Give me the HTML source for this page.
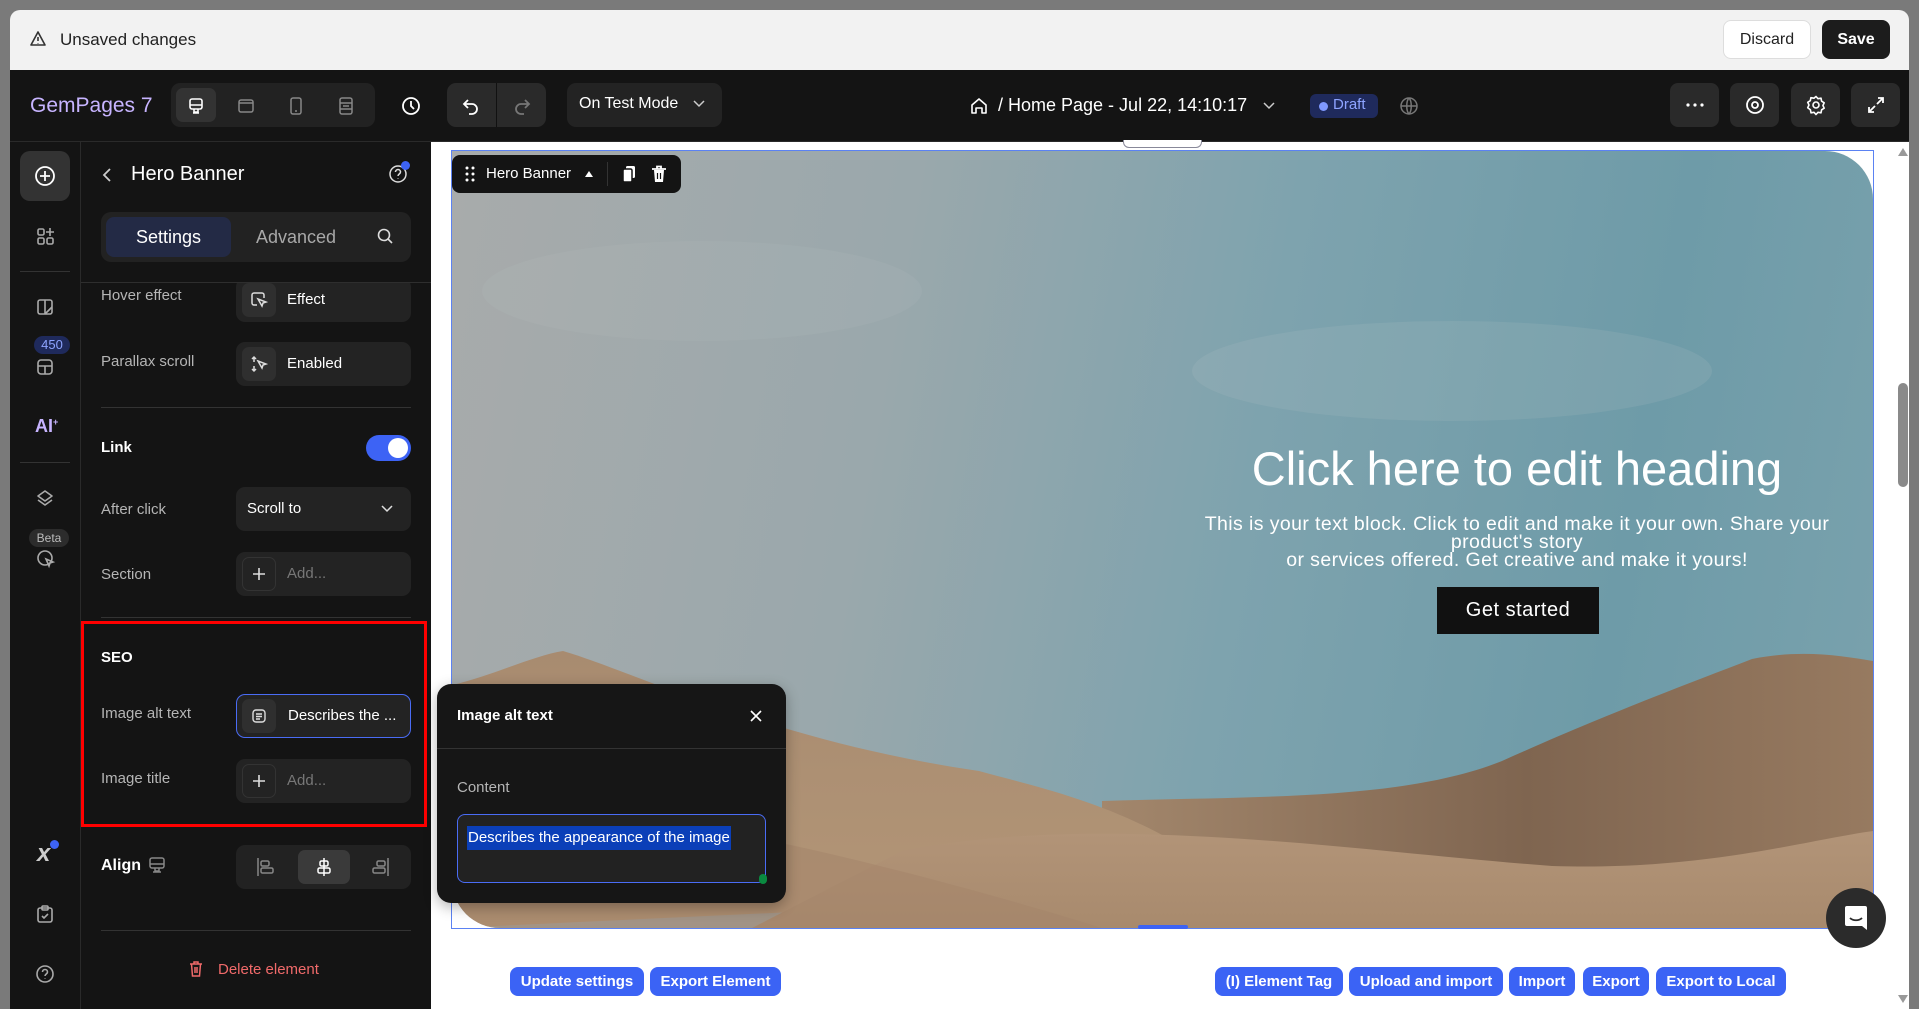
<!DOCTYPE html>
<html><head><meta charset="utf-8">
<style>
*{box-sizing:border-box;margin:0;padding:0}
body{width:1919px;height:1009px;overflow:hidden;background:#7a7a7a;font-family:"Liberation Sans",sans-serif;position:relative}
.a{position:absolute}
.t{color:#fff;white-space:nowrap}
.lbl{color:#b5b5b5;font-size:15px;white-space:nowrap}
.ctl{position:absolute;left:236px;width:175px;height:44px;background:#232323;border-radius:9px}
.ctl .ic{position:absolute;left:6px;top:5px;width:34px;height:34px;background:#2f2f2f;border-radius:7px;display:flex;align-items:center;justify-content:center}
.ctl .tx{position:absolute;left:51px;top:13px;font-size:15px;color:#fff;white-space:nowrap}
.ctl .ph{color:#777}
.tb{position:absolute;top:83px;width:49px;height:44px;background:#2a2a2a;border-radius:8px;display:flex;align-items:center;justify-content:center}
.bb{position:absolute;top:967px;height:29px;background:#3b63f5;border-radius:8px;color:#fff;font-size:15px;font-weight:bold;display:flex;align-items:center;justify-content:center;white-space:nowrap}
svg{display:block}
</style></head><body>
<!-- top bar -->
<div class="a" style="left:10px;top:10px;width:1899px;height:60px;background:#f2f2f2;border-radius:10px 10px 0 0"></div>
<svg class="a" style="left:29px;top:30px" width="18" height="18" viewBox="0 0 18 18" fill="none" stroke="#333" stroke-width="1.6"><path d="M9 2L16 15H2Z" stroke-linejoin="round"/><path d="M9 7v4M9 13v.5"/></svg>
<div class="a" style="left:60px;top:30px;font-size:17px;color:#222">Unsaved changes</div>
<div class="a" style="left:1723px;top:20px;width:88px;height:39px;background:#fff;border:1px solid #ddd;border-radius:8px;font-size:16px;color:#222;display:flex;align-items:center;justify-content:center">Discard</div>
<div class="a" style="left:1822px;top:20px;width:68px;height:39px;background:#1c1c1c;border-radius:8px;font-size:16px;font-weight:bold;color:#fff;display:flex;align-items:center;justify-content:center">Save</div>

<!-- toolbar -->
<div class="a" style="left:10px;top:70px;width:1899px;height:72px;background:#141414;border-bottom:1px solid #2a2a2a"></div>
<div class="a" style="left:30px;top:94px;font-size:21px;color:#c7b4ff">GemPages 7</div>
<div class="a" style="left:171px;top:83px;width:204px;height:44px;background:#222;border-radius:9px"></div>
<div class="a" style="left:176px;top:88px;width:40px;height:34px;background:#333;border-radius:7px"></div>
<svg class="a" style="left:186px;top:96px" width="20" height="20" viewBox="0 0 20 20" fill="none" stroke="#fff" stroke-width="1.6"><rect x="4" y="3" width="12" height="10" rx="2"/><path d="M4 9h12M8 13v3h4v-3M7 17h6"/></svg>
<svg class="a" style="left:237px;top:97px" width="18" height="18" viewBox="0 0 18 18" fill="none" stroke="#888" stroke-width="1.5"><rect x="2" y="3" width="14" height="12" rx="2"/><path d="M2 6h14"/></svg>
<svg class="a" style="left:287px;top:96px" width="18" height="20" viewBox="0 0 18 20" fill="none" stroke="#888" stroke-width="1.5"><rect x="4" y="2" width="10" height="16" rx="2"/><path d="M8 15h2"/></svg>
<svg class="a" style="left:337px;top:96px" width="18" height="20" viewBox="0 0 18 20" fill="none" stroke="#888" stroke-width="1.5"><rect x="3" y="2" width="12" height="16" rx="2"/><path d="M3 7h12M3 13h12M6 10h6"/></svg>
<svg class="a" style="left:400px;top:95px" width="22" height="22" viewBox="0 0 22 22" fill="none" stroke="#fff" stroke-width="1.8"><circle cx="11" cy="11" r="8"/><path d="M11 6v5l3 3"/></svg>
<div class="a" style="left:447px;top:83px;width:99px;height:44px;background:#2a2a2a;border-radius:9px"></div>
<div class="a" style="left:496px;top:83px;width:1px;height:44px;background:#111"></div>
<svg class="a" style="left:460px;top:95px" width="22" height="22" viewBox="0 0 22 22" fill="none" stroke="#fff" stroke-width="1.8"><path d="M8 5L4 9l4 4"/><path d="M4 9h8a5 5 0 010 10H9"/></svg>
<svg class="a" style="left:511px;top:95px" width="22" height="22" viewBox="0 0 22 22" fill="none" stroke="#777" stroke-width="1.8"><path d="M14 5l4 4-4 4"/><path d="M18 9h-8a5 5 0 000 10h3"/></svg>
<div class="a" style="left:567px;top:83px;width:155px;height:44px;background:#232323;border-radius:9px"></div>
<div class="a t" style="left:579px;top:95px;font-size:16px">On Test Mode</div>
<svg class="a" style="left:692px;top:98px" width="14" height="12" viewBox="0 0 14 12" fill="none" stroke="#ccc" stroke-width="1.5"><path d="M2 3l5 5 5-5"/></svg>
<svg class="a" style="left:969px;top:96px" width="20" height="20" viewBox="0 0 20 20" fill="none" stroke="#fff" stroke-width="1.6"><path d="M3 9l7-6 7 6v8h-4v-5H7v5H3z" stroke-linejoin="round"/></svg>
<div class="a t" style="left:998px;top:95px;font-size:18px">/ Home Page - Jul 22, 14:10:17</div>
<svg class="a" style="left:1262px;top:100px" width="14" height="12" viewBox="0 0 14 12" fill="none" stroke="#ccc" stroke-width="1.5"><path d="M2 3l5 5 5-5"/></svg>
<div class="a" style="left:1310px;top:94px;width:68px;height:24px;background:#1f2a5c;border-radius:6px"></div>
<div class="a" style="left:1319px;top:102px;width:9px;height:9px;border-radius:50%;background:#7f98ff"></div>
<div class="a" style="left:1333px;top:96px;font-size:15px;color:#8ea4ff">Draft</div>
<svg class="a" style="left:1399px;top:96px" width="20" height="20" viewBox="0 0 20 20" fill="none" stroke="#777" stroke-width="1.5"><circle cx="10" cy="10" r="8"/><path d="M2 10h16M10 2c3 3 3 13 0 16M10 2c-3 3-3 13 0 16"/></svg>
<div class="tb" style="left:1670px"><svg width="20" height="6"><circle cx="3" cy="3" r="1.6" fill="#fff"/><circle cx="10" cy="3" r="1.6" fill="#fff"/><circle cx="17" cy="3" r="1.6" fill="#fff"/></svg></div>
<div class="tb" style="left:1730px"><svg width="22" height="22" viewBox="0 0 22 22" fill="none" stroke="#fff" stroke-width="1.8"><circle cx="11" cy="11" r="8"/><circle cx="11" cy="11" r="3"/></svg></div>
<div class="tb" style="left:1791px"><svg width="22" height="22" viewBox="0 0 22 22" fill="none" stroke="#fff" stroke-width="1.6"><circle cx="11" cy="11" r="3"/><path d="M11 2.5l2 2.2 3-.5.6 3 2.6 1.6-1.3 2.7 1.3 2.7-2.6 1.6-.6 3-3-.5-2 2.2-2-2.2-3 .5-.6-3L2.7 13.7 4 11 2.7 8.3l2.6-1.6.6-3 3 .5z" stroke-linejoin="round"/></svg></div>
<div class="tb" style="left:1851px"><svg width="20" height="20" viewBox="0 0 20 20" fill="none" stroke="#fff" stroke-width="1.8"><path d="M12 3h5v5M17 3l-6 6M8 17H3v-5M3 17l6-6"/></svg></div>

<!-- left rail -->
<div class="a" style="left:10px;top:142px;width:71px;height:867px;background:#141414;border-right:1px solid #2a2a2a"></div>
<div class="a" style="left:20px;top:151px;width:50px;height:50px;background:#333;border-radius:10px"></div>
<svg class="a" style="left:33px;top:164px" width="24" height="24" viewBox="0 0 24 24" fill="none" stroke="#fff" stroke-width="1.8"><circle cx="12" cy="12" r="9"/><path d="M12 7v10M7 12h10"/></svg>
<svg class="a" style="left:36px;top:226px" width="20" height="20" viewBox="0 0 20 20" fill="none" stroke="#aaa" stroke-width="1.6"><rect x="2" y="3" width="6" height="6" rx="1.5"/><rect x="2" y="12" width="6" height="6" rx="1.5"/><rect x="11" y="12" width="6" height="6" rx="1.5"/><path d="M14 2v8M10 6h8"/></svg>
<div class="a" style="left:20px;top:271px;width:50px;height:1px;background:#333"></div>
<svg class="a" style="left:35px;top:297px" width="20" height="20" viewBox="0 0 20 20" fill="none" stroke="#aaa" stroke-width="1.6"><rect x="3" y="3" width="14" height="14" rx="2"/><path d="M10 3v14M10 17l7-7"/></svg>
<div class="a" style="left:34px;top:336px;width:36px;height:18px;background:#1f2a5c;border-radius:9px;color:#8ea4ff;font-size:13px;text-align:center;line-height:18px">450</div>
<svg class="a" style="left:35px;top:357px" width="20" height="20" viewBox="0 0 20 20" fill="none" stroke="#aaa" stroke-width="1.6"><rect x="3" y="3" width="14" height="14" rx="3"/><path d="M3 9h14M10 9v8"/></svg>
<div class="a" style="left:35px;top:416px;font-size:18px;font-weight:bold;color:#c7b4ff">AI<sup style="font-size:9px">+</sup></div>
<div class="a" style="left:20px;top:462px;width:50px;height:1px;background:#333"></div>
<svg class="a" style="left:35px;top:488px" width="20" height="20" viewBox="0 0 20 20" fill="none" stroke="#aaa" stroke-width="1.6"><path d="M10 3l7 5-7 5-7-5z M3 12l7 5 7-5" stroke-linejoin="round"/></svg>
<div class="a" style="left:29px;top:529px;width:40px;height:18px;background:#2c2c2c;border-radius:9px;color:#bbb;font-size:12px;text-align:center;line-height:18px">Beta</div>
<svg class="a" style="left:36px;top:549px" width="20" height="20" viewBox="0 0 20 20" fill="none" stroke="#aaa" stroke-width="1.6"><circle cx="9" cy="9" r="7"/><path d="M10 10l7 3-3 1-1 3z"/></svg>
<div class="a" style="left:37px;top:840px;font-size:24px;font-weight:bold;color:#ccc;font-style:italic">x</div>
<div class="a" style="left:50px;top:840px;width:9px;height:9px;border-radius:50%;background:#3d63f5"></div>
<svg class="a" style="left:35px;top:904px" width="20" height="20" viewBox="0 0 20 20" fill="none" stroke="#aaa" stroke-width="1.6"><rect x="3" y="4" width="14" height="14" rx="2"/><rect x="7" y="2" width="6" height="4" rx="1"/><path d="M7 12l2 2 4-4"/></svg>
<svg class="a" style="left:35px;top:964px" width="20" height="20" viewBox="0 0 20 20" fill="none" stroke="#aaa" stroke-width="1.6"><circle cx="10" cy="10" r="8"/><path d="M7.5 8a2.5 2.5 0 115 0c0 2-2.5 2-2.5 4M10 14.5v.5"/></svg>

<!-- panel -->
<div class="a" style="left:81px;top:142px;width:350px;height:867px;background:#141414"></div>
<svg class="a" style="left:100px;top:166px" width="14" height="18" viewBox="0 0 14 18" fill="none" stroke="#ccc" stroke-width="1.8"><path d="M10 3L4 9l6 6"/></svg>
<div class="a t" style="left:131px;top:163px;font-size:20px">Hero Banner</div>
<svg class="a" style="left:388px;top:164px" width="20" height="20" viewBox="0 0 20 20" fill="none" stroke="#ddd" stroke-width="1.5"><circle cx="10" cy="10" r="8"/><path d="M7.5 8a2.5 2.5 0 115 0c0 2-2.5 2-2.5 4M10 14.5v.5"/></svg>
<div class="a" style="left:401px;top:161px;width:9px;height:9px;border-radius:50%;background:#3d63f5"></div>
<div class="a" style="left:101px;top:212px;width:310px;height:50px;background:#222;border-radius:10px"></div>
<div class="a" style="left:106px;top:217px;width:125px;height:40px;background:#232a45;border-radius:8px;color:#fff;font-size:18px;text-align:center;line-height:40px">Settings</div>
<div class="a" style="left:256px;top:227px;font-size:18px;color:#a8a8a8">Advanced</div>
<svg class="a" style="left:376px;top:227px" width="18" height="18" viewBox="0 0 18 18" fill="none" stroke="#ddd" stroke-width="1.6"><circle cx="8" cy="8" r="5.5"/><path d="M12 12l4 4"/></svg>
<div class="a" style="left:81px;top:282px;width:350px;height:1px;background:#2e2e2e"></div>

<div style="position:absolute;left:0;top:283px;width:431px;height:726px;overflow:hidden">
 <div class="a lbl" style="left:101px;top:4px">Hover effect</div>
 <div class="ctl" style="top:-5px"><div class="ic"><svg width="18" height="18" viewBox="0 0 18 18" fill="none" stroke="#ddd" stroke-width="1.5"><path d="M14 7V4a2 2 0 00-2-2H4a2 2 0 00-2 2v8a2 2 0 002 2h3"/><path d="M8 8l8 3-3 1-1 3z"/></svg></div><div class="tx">Effect</div></div>
</div>
<div class="a lbl" style="left:101px;top:353px">Parallax scroll</div>
<div class="ctl" style="top:342px"><div class="ic"><svg width="18" height="18" viewBox="0 0 18 18" fill="none" stroke="#ddd" stroke-width="1.5"><path d="M4 2v5M2 4l2-2 2 2M4 16v-5M2 14l2 2 2-2M8 6l8 3-3 1-1 3z"/></svg></div><div class="tx">Enabled</div></div>
<div class="a" style="left:101px;top:407px;width:310px;height:1px;background:#333"></div>
<div class="a t" style="left:101px;top:439px;font-size:15px;font-weight:bold">Link</div>
<div class="a" style="left:366px;top:435px;width:45px;height:26px;background:#3d63f5;border-radius:13px"></div>
<div class="a" style="left:388px;top:438px;width:20px;height:20px;background:#fff;border-radius:50%"></div>
<div class="a lbl" style="left:101px;top:501px">After click</div>
<div class="ctl" style="top:487px"><div class="tx" style="left:11px">Scroll to</div><svg class="a" style="left:144px;top:16px" width="14" height="12" viewBox="0 0 14 12" fill="none" stroke="#ddd" stroke-width="1.5"><path d="M2 3l5 5 5-5"/></svg></div>
<div class="a lbl" style="left:101px;top:566px">Section</div>
<div class="ctl" style="top:552px"><div class="ic" style="background:none;border:1px solid #333"><svg width="14" height="14" fill="none" stroke="#ddd" stroke-width="1.6"><path d="M7 1v12M1 7h12"/></svg></div><div class="tx ph">Add...</div></div>
<div class="a" style="left:101px;top:617px;width:310px;height:1px;background:#333"></div>
<div class="a" style="left:81px;top:621px;width:346px;height:206px;border:3px solid #f00"></div>
<div class="a t" style="left:101px;top:649px;font-size:15px;font-weight:bold">SEO</div>
<div class="a lbl" style="left:101px;top:705px">Image alt text</div>
<div class="ctl" style="top:694px;border:1px solid #4a6cf5"><div class="ic" style="left:5px;top:4px"><svg width="16" height="16" viewBox="0 0 16 16" fill="none" stroke="#ddd" stroke-width="1.4"><rect x="2" y="2" width="12" height="12" rx="3"/><path d="M5 6h6M5 8.5h6M5 11h4"/></svg></div><div class="tx" style="top:12px">Describes the ...</div></div>
<div class="a lbl" style="left:101px;top:770px">Image title</div>
<div class="ctl" style="top:759px"><div class="ic" style="background:none;border:1px solid #333"><svg width="14" height="14" fill="none" stroke="#ddd" stroke-width="1.6"><path d="M7 1v12M1 7h12"/></svg></div><div class="tx ph">Add...</div></div>
<div class="a t" style="left:101px;top:857px;font-size:16px;font-weight:bold">Align</div>
<svg class="a" style="left:148px;top:856px" width="18" height="18" viewBox="0 0 18 18" fill="none" stroke="#888" stroke-width="1.5"><rect x="2" y="2" width="14" height="10" rx="2"/><path d="M2 8h14M7 12v3h4v-3M5 16h8"/></svg>
<div class="a" style="left:236px;top:845px;width:175px;height:44px;background:#222;border-radius:9px"></div>
<div class="a" style="left:298px;top:850px;width:52px;height:34px;background:#3a3a3a;border-radius:7px"></div>
<svg class="a" style="left:255px;top:856px" width="22" height="22" viewBox="0 0 22 22" fill="none" stroke="#888" stroke-width="1.5"><path d="M3 2v18"/><rect x="6" y="5" width="8" height="5" rx="1.5"/><rect x="6" y="12" width="12" height="5" rx="1.5"/></svg>
<svg class="a" style="left:313px;top:856px" width="22" height="22" viewBox="0 0 22 22" fill="none" stroke="#fff" stroke-width="1.5"><path d="M11 2v18"/><rect x="7" y="5" width="8" height="5" rx="1.5"/><rect x="5" y="12" width="12" height="5" rx="1.5"/></svg>
<svg class="a" style="left:369px;top:856px" width="22" height="22" viewBox="0 0 22 22" fill="none" stroke="#888" stroke-width="1.5"><path d="M19 2v18"/><rect x="8" y="5" width="8" height="5" rx="1.5"/><rect x="4" y="12" width="12" height="5" rx="1.5"/></svg>
<div class="a" style="left:101px;top:930px;width:310px;height:1px;background:#333"></div>
<svg class="a" style="left:188px;top:960px" width="16" height="18" viewBox="0 0 16 18" fill="none" stroke="#f06a6a" stroke-width="1.5"><path d="M2 4h12M6 4V2h4v2M3.5 4l1 12h7l1-12M7 7v6M9 7v6"/></svg>
<div class="a" style="left:218px;top:961px;font-size:15px;color:#f06a6a">Delete element</div>

<!-- canvas -->
<div class="a" style="left:431px;top:142px;width:1478px;height:867px;background:#fff"></div>
<div class="a" style="left:1123px;top:140px;width:79px;height:8px;border:1px solid #889;border-top:none;border-radius:0 0 6px 6px;background:#fff"></div>
<div class="a" style="left:452px;top:151px;width:1421px;height:777px;border-radius:0 48px 0 48px;overflow:hidden;background:linear-gradient(100deg,#a8abab 0%,#9aa8ac 30%,#7ea3ae 55%,#6e9ba8 80%,#7aa2ad 100%)">
<svg width="1421" height="777" viewBox="0 0 1421 777" style="position:absolute;left:0;top:0">
<defs>
<linearGradient id="g1" x1="0" y1="0" x2="0" y2="1"><stop offset="0" stop-color="#a88b70"/><stop offset="1" stop-color="#b39677"/></linearGradient>
<linearGradient id="g2" x1="0" y1="0" x2="1" y2="0"><stop offset="0" stop-color="#a3876c"/><stop offset="0.55" stop-color="#7f6550"/><stop offset="1" stop-color="#977a60"/></linearGradient>
<linearGradient id="g3" x1="0" y1="0" x2="0" y2="1"><stop offset="0" stop-color="#b29478"/><stop offset="1" stop-color="#a88a6d"/></linearGradient>
</defs>
<ellipse cx="1000" cy="220" rx="260" ry="50" fill="#b9c6ca" opacity=".15"/>
<ellipse cx="250" cy="140" rx="220" ry="50" fill="#c0c4c4" opacity=".12"/>
<path d="M650 650 C800 645 950 650 1050 610 C1150 565 1230 535 1300 508 C1350 498 1390 505 1421 510 L1421 777 L650 777Z" fill="url(#g2)"/>
<path d="M0 534 C40 525 80 505 111 500 C180 520 320 590 527 620 C600 640 700 660 790 740 L0 777Z" fill="url(#g1)"/>
<path d="M450 700 C650 660 900 700 1100 715 C1250 720 1350 690 1421 680 L1421 777 L300 777Z" fill="url(#g3)"/>
<path d="M0 777 L0 640 C200 660 400 700 650 777Z" fill="#a5866a" opacity=".6"/>
</svg>
<div class="a" style="left:0;top:290px;width:2130px;text-align:center;font-family:'Liberation Sans',sans-serif;font-size:47px;color:#fff">Click here to edit heading</div>
<div class="a" style="left:730px;top:364px;width:670px;text-align:center;font-family:'Liberation Sans',sans-serif;font-size:19.5px;line-height:18px;color:#fff;letter-spacing:.4px">This is your text block. Click to edit and make it your own. Share your product's story<br>or services offered. Get creative and make it yours!</div>
<div class="a" style="left:985px;top:436px;width:162px;height:47px;background:#111;color:#fff;font-family:'Liberation Sans',sans-serif;font-size:20px;text-align:center;line-height:47px;letter-spacing:.5px">Get started</div>
</div>
<div class="a" style="left:451px;top:150px;width:1423px;height:779px;border:1px solid #5b82f3"></div>
<div class="a" style="left:1138px;top:925px;width:50px;height:4px;background:#3d63f5;border-radius:2px"></div>
<!-- hero chip -->
<div class="a" style="left:452px;top:155px;width:229px;height:38px;background:#141414;border-radius:8px"></div>
<svg class="a" style="left:465px;top:166px" width="10" height="16"><g fill="#fff"><circle cx="2" cy="2" r="1.5"/><circle cx="8" cy="2" r="1.5"/><circle cx="2" cy="8" r="1.5"/><circle cx="8" cy="8" r="1.5"/><circle cx="2" cy="14" r="1.5"/><circle cx="8" cy="14" r="1.5"/></g></svg>
<div class="a t" style="left:486px;top:165px;font-size:15px">Hero Banner</div>
<svg class="a" style="left:584px;top:170px" width="10" height="8"><path d="M1 7L5 1 9 7z" fill="#fff"/></svg>
<div class="a" style="left:607px;top:162px;width:1px;height:24px;background:#333"></div>
<svg class="a" style="left:621px;top:165px" width="16" height="18" viewBox="0 0 16 18"><rect x="5" y="1" width="9" height="12" rx="1.5" fill="#fff"/><rect x="2" y="4" width="9" height="13" rx="1.5" fill="#fff" stroke="#141414" stroke-width="1.5"/></svg>
<svg class="a" style="left:651px;top:165px" width="16" height="18" viewBox="0 0 16 18"><path d="M1 4h14M6 4V1.5h4V4" stroke="#fff" stroke-width="1.8" fill="none"/><path d="M3 5h10l-1 12H4z" fill="#fff"/><path d="M6.5 8v6M9.5 8v6" stroke="#141414" stroke-width="1.2"/></svg>

<!-- popup -->
<div class="a" style="left:437px;top:684px;width:349px;height:219px;background:#161616;border-radius:14px;box-shadow:0 4px 14px rgba(0,0,0,.3)"></div>
<div class="a t" style="left:457px;top:707px;font-size:15px;font-weight:bold">Image alt text</div>
<svg class="a" style="left:749px;top:709px" width="14" height="14" fill="none" stroke="#fff" stroke-width="1.6"><path d="M2 2l10 10M12 2L2 12"/></svg>
<div class="a" style="left:437px;top:748px;width:349px;height:1px;background:#333"></div>
<div class="a" style="left:457px;top:779px;font-size:15px;color:#b5b5b5">Content</div>
<div class="a" style="left:457px;top:814px;width:309px;height:69px;background:#222;border:1px solid #4a6cf5;border-radius:8px"></div>
<div class="a" style="left:467px;top:826px;height:24px;background:#0b3fb8;color:#fff;font-size:15px;line-height:24px;padding:0 1px;white-space:nowrap">Describes the appearance of the image</div>
<div class="a" style="left:759px;top:874px;width:8px;height:10px;border-radius:4px;background:#0a8a40"></div>

<!-- bottom buttons -->
<div class="bb" style="left:510px;width:134px">Update settings</div>
<div class="bb" style="left:650px;width:131px">Export Element</div>
<div class="bb" style="left:1215px;width:128px">(I) Element Tag</div>
<div class="bb" style="left:1349px;width:154px">Upload and import</div>
<div class="bb" style="left:1509px;width:66px">Import</div>
<div class="bb" style="left:1583px;width:66px">Export</div>
<div class="bb" style="left:1656px;width:130px">Export to Local</div>

<!-- chat -->
<div class="a" style="left:1826px;top:888px;width:60px;height:60px;border-radius:50%;background:#2b2b2b"></div>
<svg class="a" style="left:1843px;top:904px" width="26" height="28" viewBox="0 0 26 28"><path d="M4 2h18a2 2 0 012 2v22l-5-4H4a2 2 0 01-2-2V4a2 2 0 012-2z" fill="#fff"/><path d="M7 14c3 3 9 3 12 0" stroke="#2b2b2b" stroke-width="1.8" fill="none"/></svg>

<!-- scrollbar -->
<div class="a" style="left:1897px;top:142px;width:12px;height:867px;background:#fff"></div>
<svg class="a" style="left:1897px;top:147px" width="12" height="10"><path d="M6 1L11 9H1z" fill="#999"/></svg>
<div class="a" style="left:1898px;top:383px;width:10px;height:104px;background:#8a8a8a;border-radius:5px"></div>
<svg class="a" style="left:1897px;top:994px" width="12" height="10"><path d="M1 1h10L6 9z" fill="#999"/></svg>
</body></html>
